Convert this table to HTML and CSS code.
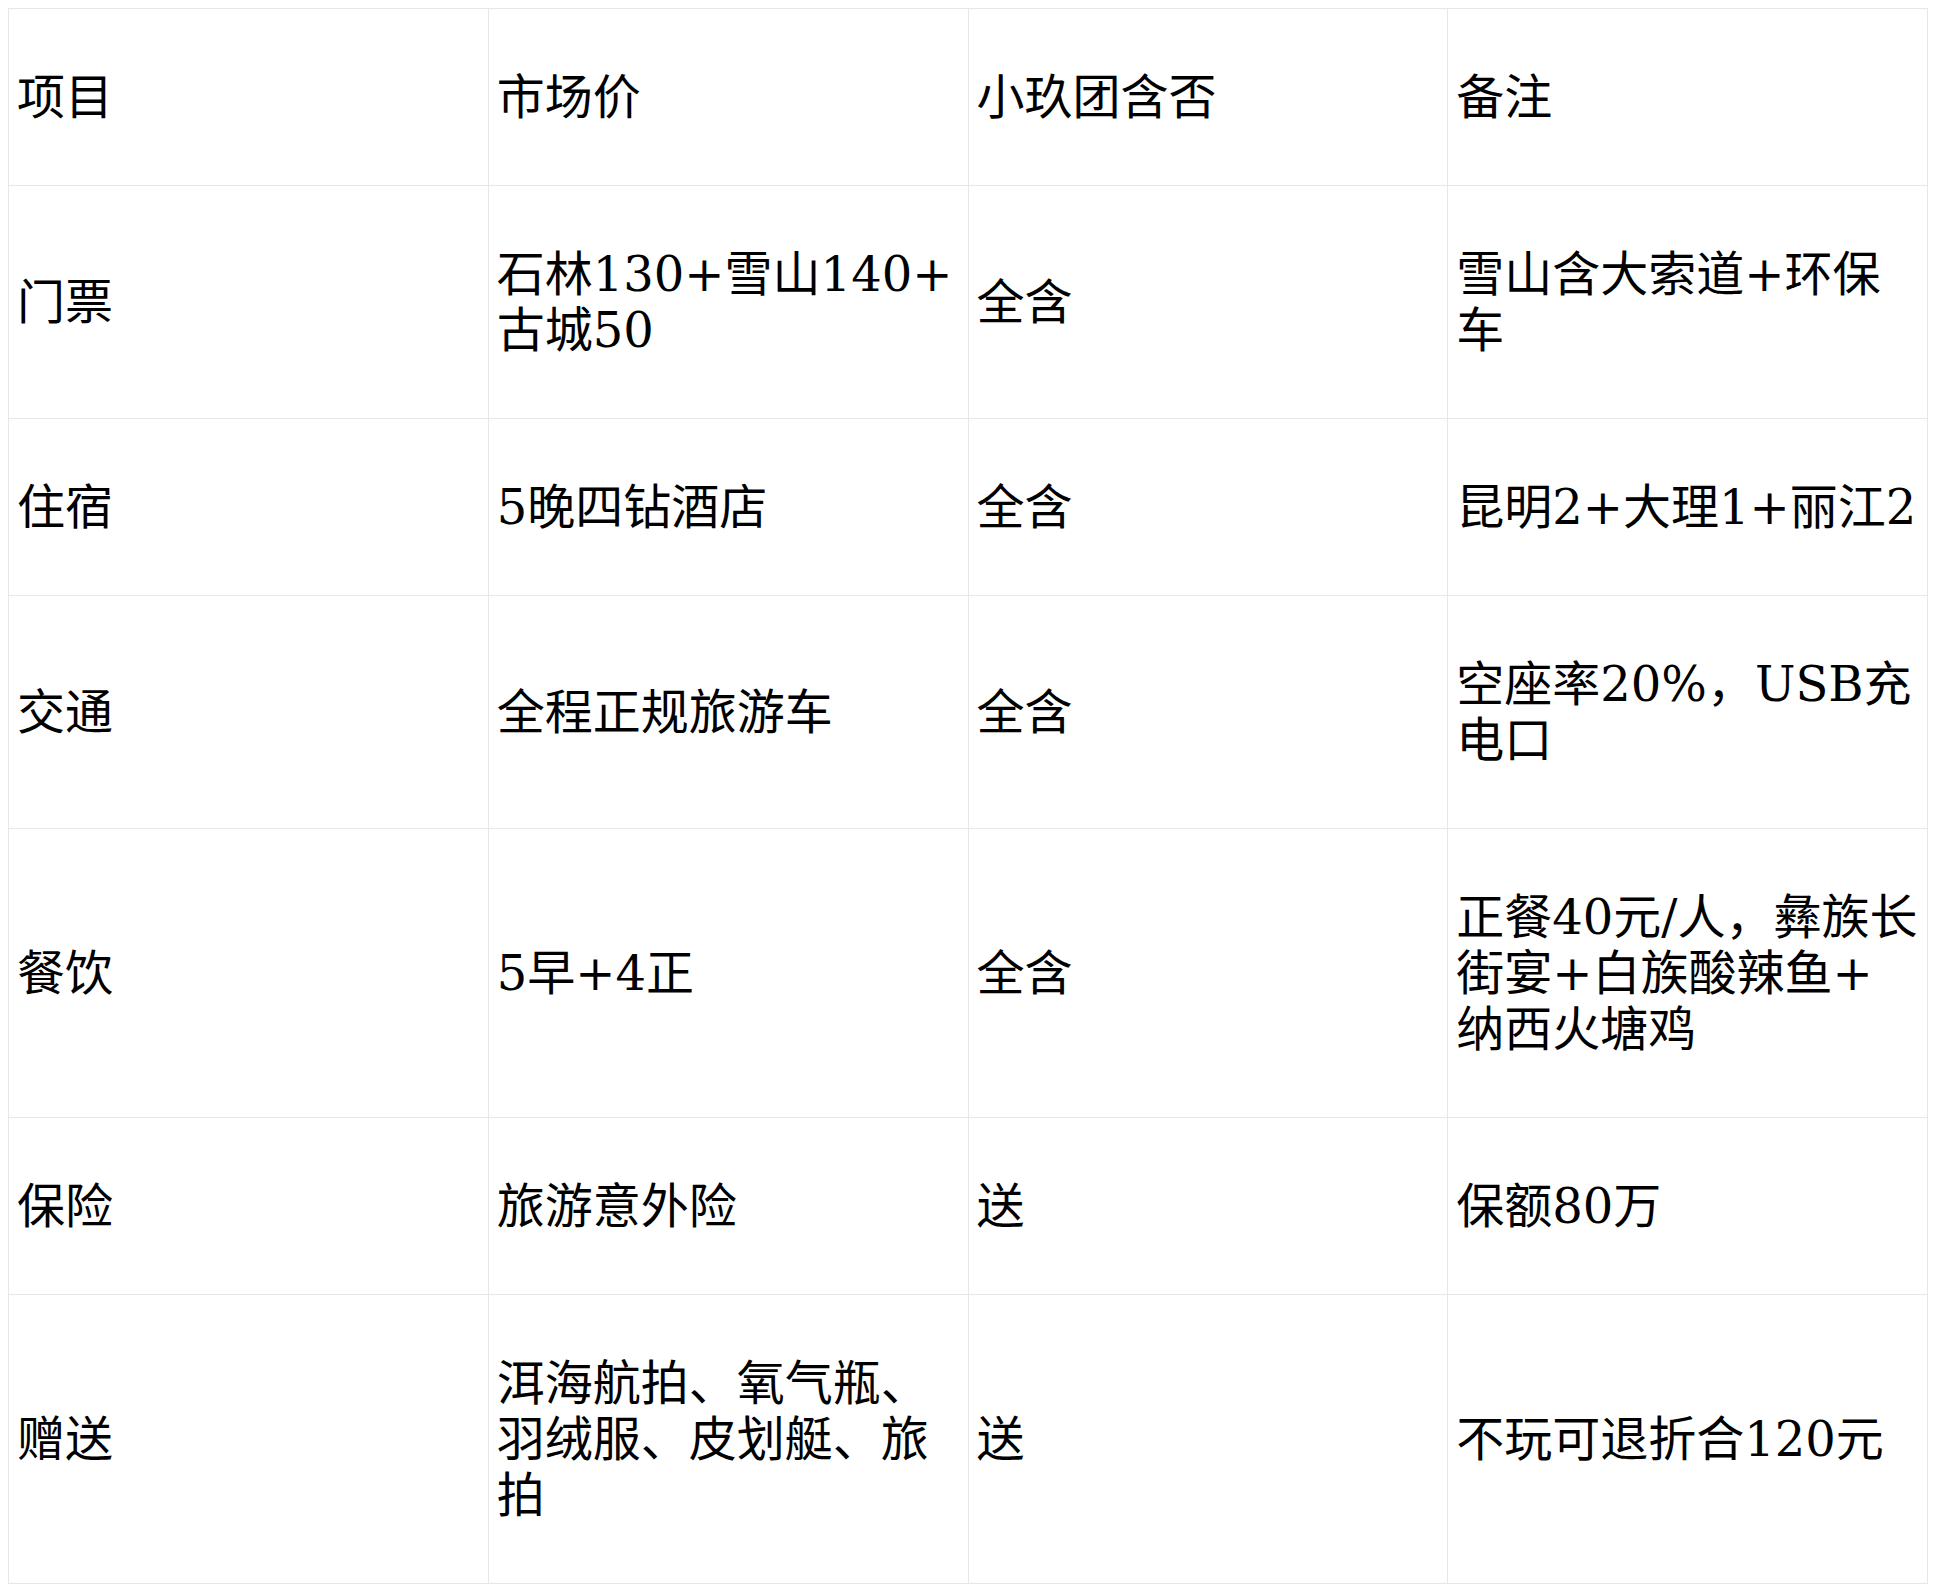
FILE: index.html
```html
<!DOCTYPE html>
<html lang="zh-CN">
<head>
<meta charset="utf-8">
<title>费用说明</title>
<link rel="stylesheet" href="styles.css">
</head>
<body>
<table class="fee-table">
  <colgroup><col class="c"><col class="c"><col class="c"><col class="c"></colgroup>
  <thead>
    <tr><th>项目</th><th>市场价</th><th>小玖团含否</th><th>备注</th></tr>
  </thead>
  <tbody>
    <tr><td>门票</td><td>石林130+雪山140+古城50</td><td>全含</td><td>雪山含大索道+环保车</td></tr>
    <tr><td>住宿</td><td>5晚四钻酒店</td><td>全含</td><td>昆明2+大理1+丽江2</td></tr>
    <tr><td>交通</td><td>全程正规旅游车</td><td>全含</td><td>空座率20%，USB充电口</td></tr>
    <tr><td>餐饮</td><td>5早+4正</td><td>全含</td><td>正餐40元/人，彝族长街宴+白族酸辣鱼+纳西火塘鸡</td></tr>
    <tr><td>保险</td><td>旅游意外险</td><td>送</td><td>保额80万</td></tr>
    <tr><td>赠送</td><td>洱海航拍、氧气瓶、羽绒服、皮划艇、旅拍</td><td>送</td><td>不玩可退折合120元</td></tr>
  </tbody>
</table>
</body>
</html>
```
FILE: styles.css
```css
html, body {
  background: #ffffff;
}
body {
  margin: 8px;
  font-family: "DejaVu Serif", "Noto Sans CJK SC", serif;
  color: #000000;
}
.fee-table {
  width: 1920px;
  border-collapse: collapse;
  table-layout: fixed;
}
.fee-table .c {
  width: 25%;
}
.fee-table th,
.fee-table td {
  border: 1px solid #e5e7eb;
  padding: 60px 8px;
  font-size: 48px;
  font-weight: normal;
  line-height: 56px;
  text-align: left;
  vertical-align: middle;
  line-break: anywhere;
}
```
